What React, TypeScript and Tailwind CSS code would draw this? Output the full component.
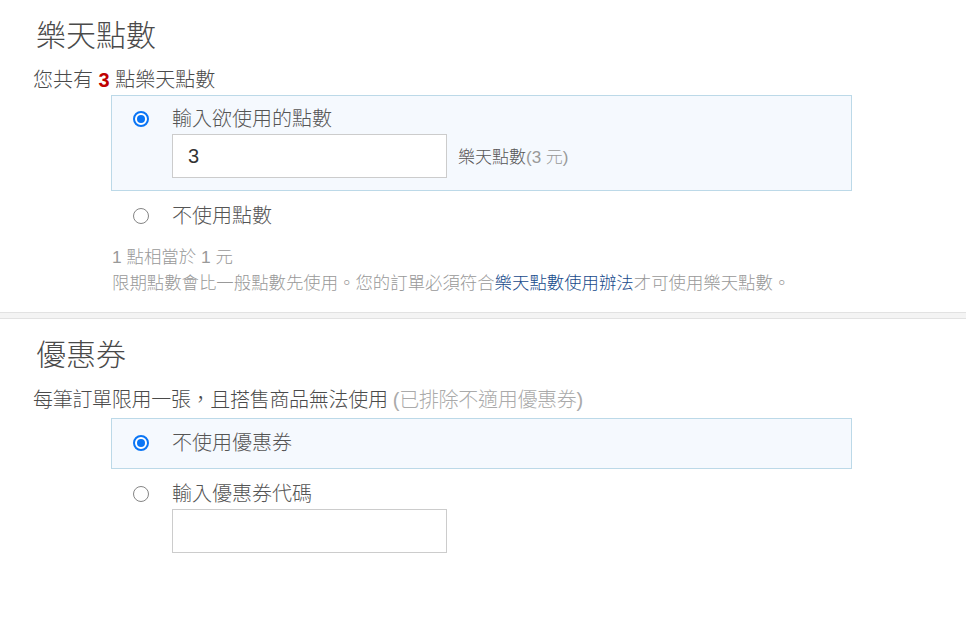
import React from "react";

const font = { fontFamily: '"Liberation Sans", "Noto Sans CJK TC", sans-serif' };

function Radio({ checked }: { checked?: boolean }) {
  if (checked) {
    return (
      <span className="w-[16px] h-[16px] rounded-full border-2 border-[#0a75f5] bg-white flex items-center justify-center shrink-0">
        <span className="w-[8px] h-[8px] rounded-full bg-[#0a75f5]" />
      </span>
    );
  }
  return <span className="w-[16px] h-[16px] rounded-full border-[1.5px] border-[#858585] bg-white shrink-0" />;
}

function OptionRow({ checked, label }: { checked?: boolean; label: string }) {
  return (
    <div className="flex items-center h-[28px]">
      <div className="w-[60px] pl-[21px] flex items-center">
        <Radio checked={checked} />
      </div>
      <span className="text-[20px] leading-[28px] text-[#555] font-light">{label}</span>
    </div>
  );
}

export default function App() {
  return (
    <div className="w-full min-h-[618px] bg-white" style={font}>
      {/* Rakuten points */}
      <section className="pt-[18px] pb-[16px]">
        <h2 className="pl-[36px] text-[30px] leading-[36px] text-[#4a4a4a] font-light">樂天點數</h2>
        <p className="mt-[12px] pl-[33px] text-[20px] leading-[28px] text-[#4a4a4a] font-light">
          您共有 <span className="font-bold text-[#bf0000]">3</span> 點樂天點數
        </p>
        <div className="ml-[111px] w-[741px]">
          <div className="mt-px border border-[#bcd9e8] bg-[#f5f9fe] pt-[9px] pb-[12px]">
            <OptionRow checked label="輸入欲使用的點數" />
            <div className="mt-px pl-[60px] flex items-center">
              <input
                type="text"
                readOnly
                value="3"
                className="w-[275px] h-[44px] border border-[#ccc] bg-white px-[15px] text-[20px] text-[#333] outline-none"
                style={font}
              />
              <span className="ml-[11px] mt-[3px] text-[17px] text-[#555] font-light">
                樂天點數<span className="text-[#999]">(3 元)</span>
              </span>
            </div>
          </div>
          <div className="mt-[10px] border border-transparent">
            <OptionRow label="不使用點數" />
          </div>
          <div className="mt-[13px] pl-px text-[17.4px] leading-[26px] text-[#999] font-light">
            <p>1 點相當於 1 元</p>
            <p>
              限期點數會比一般點數先使用。您的訂單必須符合
              <span className="text-[#174a8b]">樂天點數使用辦法</span>
              才可使用樂天點數。
            </p>
          </div>
        </div>
      </section>

      <div className="h-[7px] border-y border-[#e2e2e2] bg-[#f4f4f4]" />

      {/* Coupons */}
      <section className="pt-[18px] pb-[40px]">
        <h2 className="pl-[36px] text-[30px] leading-[36px] text-[#4a4a4a] font-light">優惠券</h2>
        <p className="mt-[13px] pl-[33px] text-[20px] leading-[28px] text-[#4a4a4a] font-light tracking-[-0.3px]">
          每筆訂單限用一張，且搭售商品無法使用 <span className="text-[#aaa]">(已排除不適用優惠券)</span>
        </p>
        <div className="ml-[111px] w-[741px]">
          <div className="mt-[4px] border border-[#bcd9e8] bg-[#f5f9fe] pt-[10px] pb-[11px]">
            <OptionRow checked label="不使用優惠券" />
          </div>
          <div className="mt-[10px] border border-transparent">
            <OptionRow label="輸入優惠券代碼" />
            <div className="mt-px pl-[60px]">
              <input
                type="text"
                readOnly
                value=""
                className="w-[275px] h-[44px] border border-[#ccc] bg-white px-[15px] text-[20px] text-[#333] outline-none"
                style={font}
              />
            </div>
          </div>
        </div>
      </section>
    </div>
  );
}
